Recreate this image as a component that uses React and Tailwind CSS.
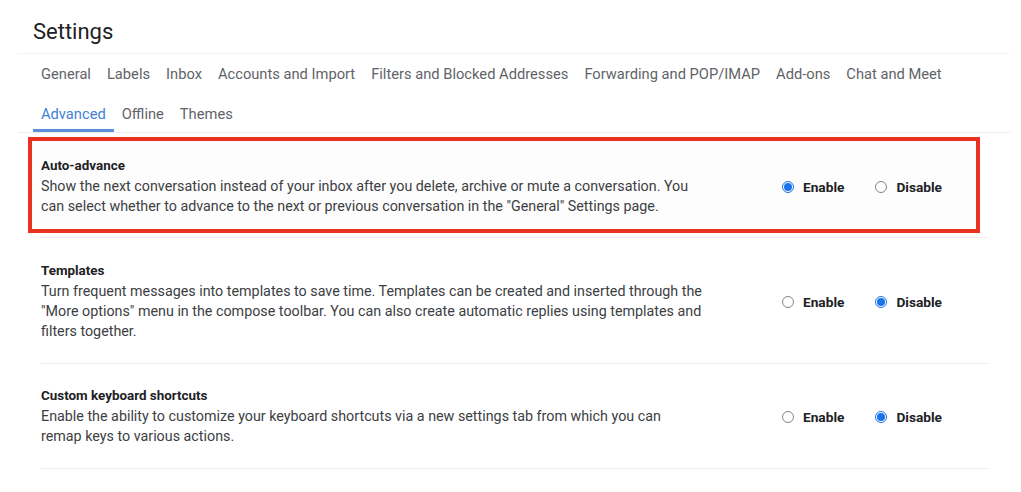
const tabsRow1 = [
  'General',
  'Labels',
  'Inbox',
  'Accounts and Import',
  'Filters and Blocked Addresses',
  'Forwarding and POP/IMAP',
  'Add-ons',
  'Chat and Meet',
];

const tabsRow2 = ['Advanced', 'Offline', 'Themes'];

function Radio({ checked, label }) {
  return (
    <label className="flex items-center gap-[9px]">
      {checked ? (
        <span className="w-[12px] h-[12px] rounded-full border border-[#1a73e8] flex items-center justify-center">
          <span className="w-[8px] h-[8px] rounded-full bg-[#1a73e8]" />
        </span>
      ) : (
        <span className="w-[12px] h-[12px] rounded-full border border-[#80868b]" />
      )}
      <span className="text-[13.7px] font-bold text-[#202124]">{label}</span>
    </label>
  );
}

function SettingRow({ title, lines, enabled }) {
  return (
    <div className="flex items-center">
      <div className="w-[700px] shrink-0">
        <p className="text-[13.4px] leading-[20px] font-bold text-[#202124]">{title}</p>
        {lines.map((l) => (
          <p key={l} className="text-[14.3px] leading-[20px] text-[#3c4043] whitespace-nowrap">
            {l}
          </p>
        ))}
      </div>
      <div className="flex items-center gap-[31px] ml-[41px] mt-[2px]">
        <Radio checked={enabled} label="Enable" />
        <Radio checked={!enabled} label="Disable" />
      </div>
    </div>
  );
}

export default function App() {
  return (
    <div className="w-[1021px] h-[492px] bg-white overflow-hidden font-['Roboto',sans-serif]">
      {/* Header */}
      <div className="ml-[18px] w-[992px] h-[54px] border-b border-[#f1f3f4] pl-[15px] pt-[18px]">
        <h1 className="text-[22px] leading-[28px] text-[#202124]">Settings</h1>
      </div>

      {/* Tabs */}
      <div className="ml-[18px] w-[992px] border-b border-[#eceff1] pl-[15px] pt-[1px]">
        <div className="flex h-[39px] items-center">
          {tabsRow1.map((t) => (
            <span key={t} className="px-2 text-[14.7px] text-[#5f6368]">
              {t}
            </span>
          ))}
        </div>
        <div className="flex h-[38px]">
          {tabsRow2.map((t, i) => (
            <span
              key={t}
              className={
                i === 0
                  ? 'px-2 pt-[9px] text-[14.7px] text-[#3f7fd6] border-b-[3px] border-[#5b8fd9]'
                  : 'px-2 pt-[9px] text-[14.7px] text-[#5f6368]'
              }
            >
              {t}
            </span>
          ))}
        </div>
      </div>

      {/* Highlighted row */}
      <div className="ml-[28px] mt-[4px] w-[952px] h-[96px] border-4 border-[#e8321f] bg-[#fdfdfd] pl-[9px] pt-[15px]">
        <SettingRow
          title="Auto-advance"
          enabled
          lines={[
            'Show the next conversation instead of your inbox after you delete, archive or mute a conversation. You',
            'can select whether to advance to the next or previous conversation in the "General" Settings page.',
          ]}
        />
      </div>
      <div className="ml-[41px] mt-[4px] w-[948px] border-b border-[#eceff1]" />

      <div className="ml-[41px] w-[948px]">
        <div className="pt-[23px] pb-[22px] border-b border-[#eceff1]">
          <SettingRow
            title="Templates"
            enabled={false}
            lines={[
              'Turn frequent messages into templates to save time. Templates can be created and inserted through the',
              '"More options" menu in the compose toolbar. You can also create automatic replies using templates and',
              'filters together.',
            ]}
          />
        </div>
        <div className="pt-[22px] pb-[22px] border-b border-[#eceff1]">
          <SettingRow
            title="Custom keyboard shortcuts"
            enabled={false}
            lines={[
              'Enable the ability to customize your keyboard shortcuts via a new settings tab from which you can',
              'remap keys to various actions.',
            ]}
          />
        </div>
      </div>
    </div>
  );
}
